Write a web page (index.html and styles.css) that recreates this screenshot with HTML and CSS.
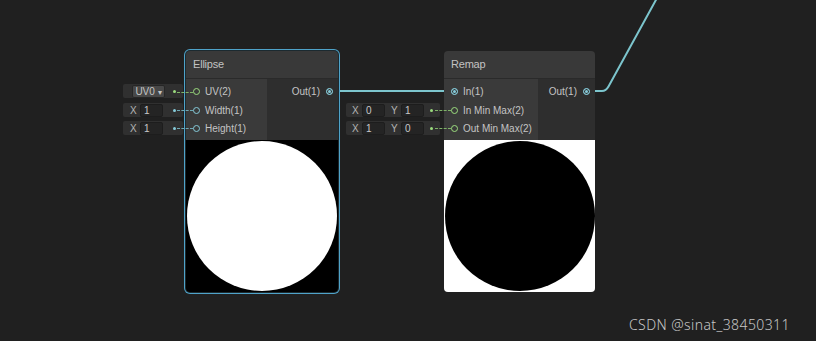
FILE: index.html
```html
<!DOCTYPE html>
<html lang="en">
    <head>
        <title>Shader Graph</title>
        <meta charset="utf-8">
        <link rel="stylesheet" href="styles.css">
    </head>
    <body>
        <div class="canvas">
            <svg class="wires" width="816" height="341" viewBox="0 0 816 341">
                <path d="M333 91 H450" />
                <path d="M590 91 H602 Q606 91 608.5 86.5 L657 -2" />
            </svg>

            <div class="node ellipse selected">
                <div class="title">Ellipse</div>
                <div class="body">
                    <div class="inputs">
                        <div class="slot">
                            <div class="field">
                                <span class="dropdown">UV0 <b>&#9662;</b></span>
                                <i class="dot green"></i>
                            </div>
                            <i class="link green"></i>
                            <i class="port green"></i>
                            <span class="label">UV(2)</span>
                        </div>
                        <div class="slot">
                            <div class="field">
                                <span class="axis">X</span><span class="box">1</span>
                                <i class="dot cyan"></i>
                            </div>
                            <i class="link cyan"></i>
                            <i class="port cyan"></i>
                            <span class="label">Width(1)</span>
                        </div>
                        <div class="slot">
                            <div class="field">
                                <span class="axis">X</span><span class="box">1</span>
                                <i class="dot cyan"></i>
                            </div>
                            <i class="link cyan"></i>
                            <i class="port cyan"></i>
                            <span class="label">Height(1)</span>
                        </div>
                    </div>
                    <div class="outputs">
                        <div class="slot out">
                            <span class="label">Out(1)</span>
                            <i class="port cyan filled"></i>
                        </div>
                    </div>
                </div>
                <div class="preview"><div class="circle"></div></div>
            </div>

            <div class="node remap">
                <div class="title">Remap</div>
                <div class="body">
                    <div class="inputs">
                        <div class="slot">
                            <i class="port cyan filled"></i>
                            <span class="label">In(1)</span>
                        </div>
                        <div class="slot">
                            <div class="field wide">
                                <span class="axis">X</span><span class="box">0</span>
                                <span class="axis">Y</span><span class="box">1</span>
                                <i class="dot green"></i>
                            </div>
                            <i class="link green"></i>
                            <i class="port green"></i>
                            <span class="label">In Min Max(2)</span>
                        </div>
                        <div class="slot">
                            <div class="field wide">
                                <span class="axis">X</span><span class="box">1</span>
                                <span class="axis">Y</span><span class="box">0</span>
                                <i class="dot green"></i>
                            </div>
                            <i class="link green"></i>
                            <i class="port green"></i>
                            <span class="label">Out Min Max(2)</span>
                        </div>
                    </div>
                    <div class="outputs">
                        <div class="slot out">
                            <span class="label">Out(1)</span>
                            <i class="port cyan filled"></i>
                        </div>
                    </div>
                </div>
                <div class="preview"><div class="circle"></div></div>
            </div>

            <div class="mark">CSDN @sinat_38450311</div>
        </div>
    </body>
</html>
```

FILE: styles.css
```css
body {
    margin: 0;
    background: #202020;
}
.canvas {
    position: relative;
    width: 816px;
    height: 341px;
    overflow: hidden;
    background: #202020;
    font-family: "Liberation Sans", Arial, sans-serif;
    color: #c4c4c4;
}
.wires {
    position: absolute;
    left: 0;
    top: 0;
}
.wires path {
    fill: none;
    stroke: #7cc5cd;
    stroke-width: 2;
}

/* nodes */
.node {
    position: absolute;
    top: 51px;
    height: 241px;
    display: flex;
    flex-direction: column;
    border-radius: 4px;
    background: #393939;
}
.ellipse {
    left: 186px;
    width: 152px;
}
.remap {
    left: 444px;
    width: 151px;
}
.selected {
    box-shadow: 0 0 0 1px #1c2a30, 0 0 0 2px #4fa3c9;
}
.title {
    height: 27px;
    line-height: 27px;
    padding-left: 7px;
    font-size: 11px;
    letter-spacing: -0.2px;
    color: #c2c2c2;
    border-bottom: 1px solid #2a2a2a;
}
.body {
    display: flex;
    height: 61px;
}
.inputs {
    background: #3a3a3a;
    padding-top: 3px;
}
.ellipse .inputs {
    width: 81px;
}
.remap .inputs {
    width: 94px;
}
.outputs {
    flex: 1;
    background: #2e2e2e;
    padding-top: 3px;
}
.preview {
    height: 152px;
    display: flex;
    align-items: center;
    justify-content: center;
    border-radius: 0 0 4px 4px;
    overflow: hidden;
}
.circle {
    width: 150px;
    height: 150px;
    border-radius: 50%;
}
.ellipse .preview {
    background: #000;
}
.ellipse .circle {
    background: #fff;
}
.remap .preview {
    background: #fff;
}
.remap .circle {
    background: #000;
}

/* slots */
.slot {
    position: relative;
    display: flex;
    align-items: center;
    height: 18px;
    font-size: 10px;
}
.inputs .slot:first-child {
    height: 19px;
}
.slot .label {
    margin-left: 5px;
    white-space: nowrap;
}
.out {
    justify-content: flex-end;
    padding-right: 5px;
}
.out .label {
    margin: 0 6px 0 0;
}
.port {
    display: block;
    width: 5px;
    height: 5px;
    margin-left: 7px;
    border: 1px solid;
    border-radius: 50%;
}
.port.green {
    border-color: #9bdc7e;
}
.port.cyan {
    border-color: #86cbd9;
}
.port.filled {
    background: #86cbd9;
    box-shadow: inset 0 0 0 1px #333;
}
.out .port {
    margin-left: 0;
}

/* inline value fields */
.field {
    position: absolute;
    right: calc(100% + 3px);
    top: 2px;
    width: 60px;
    height: 14px;
    display: flex;
    align-items: center;
    background: #303030;
    border-radius: 2px;
    color: #b4b4b4;
}
.field.wide {
    right: calc(100% + 4px);
    width: 94px;
}
.axis {
    width: 9px;
    padding-left: 7px;
    font-size: 10px;
}
.wide .axis {
    padding-left: 6px;
}
.box {
    width: 18px;
    height: 11px;
    line-height: 11px;
    padding-left: 3px;
    margin-left: 1px;
    background: #242424;
    border: 1px solid #1d1d1d;
    border-radius: 2px;
    font-size: 10px;
    color: #c8c8c8;
}
.dropdown {
    width: 31px;
    height: 11px;
    line-height: 11px;
    margin-left: 9px;
    background: #484848;
    border: 1px solid #262626;
    border-radius: 2px;
    text-align: center;
    font-size: 10px;
    color: #c4c4c4;
}
.dropdown b {
    font-weight: normal;
    font-size: 8px;
}
.dot {
    display: block;
    width: 3px;
    height: 3px;
    margin-left: auto;
    margin-right: 7px;
    border-radius: 50%;
}
.dot.green {
    background: #9bdc7e;
}
.dot.cyan {
    background: #86cbd9;
}
.link {
    position: absolute;
    left: -9px;
    top: 9px;
    width: 16px;
    border-top: 1px dashed;
}
.inputs .slot:first-child .link {
    top: 9.5px;
}
.link.green {
    border-color: #7fb468;
}
.link.cyan {
    border-color: #6fa9b5;
}
.mark {
    position: absolute;
    left: 629px;
    top: 315px;
    font-family: "Noto Sans", sans-serif;
    font-size: 14px;
    font-weight: 300;
    letter-spacing: 0.4px;
    color: #c6c6c6;
}
```
